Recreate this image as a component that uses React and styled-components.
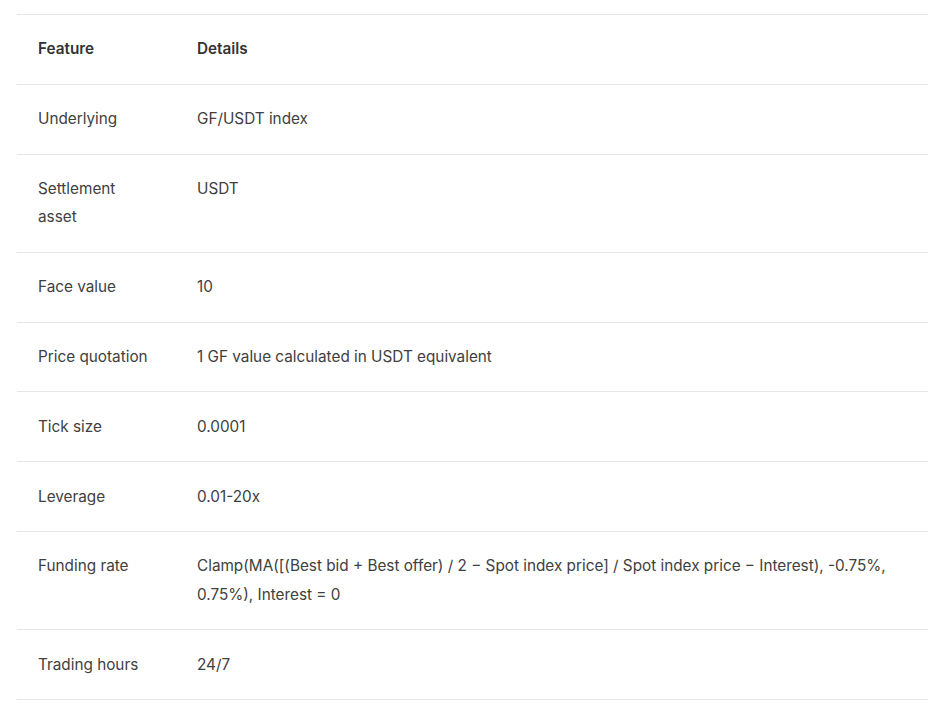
import React from 'react';
import styled, { createGlobalStyle } from 'styled-components';

const GlobalStyle = createGlobalStyle`
    body {
        margin: 0;
        background: #fff;
        font-family: Inter, "Noto Sans", sans-serif;
        color: #333;
    }
`;

const rows = [
    ['Underlying', 'GF/USDT index'],
    ['Settlement asset', 'USDT'],
    ['Face value', '10'],
    ['Price quotation', '1 GF value calculated in USDT equivalent'],
    ['Tick size', '0.0001'],
    ['Leverage', '0.01-20x'],
    [
        'Funding rate',
        'Clamp(MA([(Best bid + Best offer) / 2 − Spot index price] / Spot index price − Interest), -0.75%, 0.75%), Interest = 0',
    ],
    ['Trading hours', '24/7'],
];

const App = () => {
    return (
        <StPage>
            <GlobalStyle />
            <StTable>
                <thead>
                    <tr>
                        <StHead $first>Feature</StHead>
                        <StHead>Details</StHead>
                    </tr>
                </thead>
                <tbody>
                    {rows.map(([feature, details]) => (
                        <tr key={feature}>
                            <StCell $first>{feature}</StCell>
                            <StCell>{details}</StCell>
                        </tr>
                    ))}
                </tbody>
            </StTable>
        </StPage>
    );
};

export default App;

const StPage = styled.div`
    padding: 14px 19px 10px 17px;
`;

const StTable = styled.table`
    width: 911px;
    border-collapse: collapse;
    border-top: 1px solid #e6e6e6;
    font-size: 15.3px;
`;

const StHead = styled.th`
    text-align: left;
    font-weight: 600;
    line-height: 28.5px;
    padding: 20.4px 21px 19.9px;
    border-bottom: 1px solid #e6e6e6;
    color: #333;
    width: ${(props) => (props.$first ? '117px' : 'auto')};
`;

const StCell = styled.td`
    vertical-align: top;
    line-height: 28.5px;
    padding: 20.4px 21px 19.9px;
    border-bottom: 1px solid #e6e6e6;
    color: #404040;
    width: ${(props) => (props.$first ? '117px' : 'auto')};
`;
